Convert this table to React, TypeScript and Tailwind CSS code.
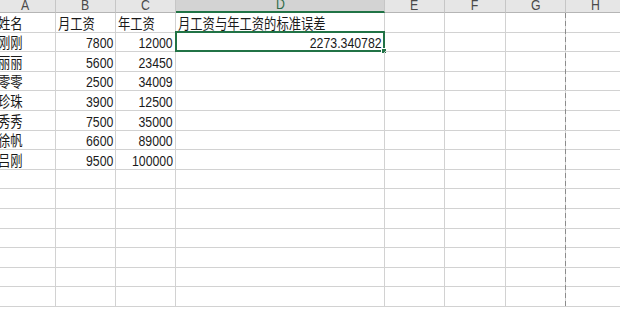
const COLS = [
  { key: "A", w: "w-[60px]" },
  { key: "B", w: "w-[60px]" },
  { key: "C", w: "w-[60px]" },
  { key: "D", w: "w-[209px]" },
  { key: "E", w: "w-[60px]" },
  { key: "F", w: "w-[61px]" },
  { key: "G", w: "w-[60px]" },
  { key: "H", w: "w-[60px]" },
];

// Row heights follow the ~19.6px pitch of the sheet, rounded per row.
const ROW_H = [
  "h-[20px]",
  "h-[19px]",
  "h-[20px]",
  "h-[19px]",
  "h-[20px]",
  "h-[20px]",
  "h-[19px]",
  "h-[20px]",
  "h-[19px]",
  "h-[20px]",
  "h-[20px]",
  "h-[19px]",
  "h-[20px]",
  "h-[19px]",
  "h-[20px]",
];

type Cell = { text: string; num?: boolean };

const DATA: Cell[][] = [
  [{ text: "姓名" }, { text: "月工资" }, { text: "年工资" }, { text: "月工资与年工资的标准误差" }],
  [{ text: "刚刚" }, { text: "7800", num: true }, { text: "12000", num: true }, { text: "2273.340782", num: true }],
  [{ text: "丽丽" }, { text: "5600", num: true }, { text: "23450", num: true }],
  [{ text: "零零" }, { text: "2500", num: true }, { text: "34009", num: true }],
  [{ text: "珍珠" }, { text: "3900", num: true }, { text: "12500", num: true }],
  [{ text: "秀秀" }, { text: "7500", num: true }, { text: "35000", num: true }],
  [{ text: "徐帆" }, { text: "6600", num: true }, { text: "89000", num: true }],
  [{ text: "吕刚" }, { text: "9500", num: true }, { text: "100000", num: true }],
];

const FONT = "font-['Liberation_Sans','Noto_Sans_CJK_SC',sans-serif]";

function HeaderRow() {
  return (
    <div className="flex h-[13px] overflow-hidden">
      {COLS.map((c) => {
        const active = c.key === "D";
        return (
          <div
            key={c.key}
            className={`${c.w} flex shrink-0 items-end justify-center overflow-hidden border-r border-r-[#c6c6c6] ${
              active
                ? "border-b-2 border-b-[#217346] bg-[#d3d3d3] text-[#2f6b47]"
                : "border-b border-b-[#b5b5b5] bg-[#e6e6e6] text-[#4a4a4a]"
            }`}
          >
            <span className="inline-block origin-bottom scale-x-[0.82] text-[15px] leading-none">{c.key}</span>
          </div>
        );
      })}
    </div>
  );
}

function Row({ cells, h, selected }: { cells: Cell[]; h: string; selected: boolean }) {
  return (
    <div className={`flex ${h}`}>
      {COLS.map((c, i) => {
        const cell = cells[i];
        const isSel = selected && i === 3;
        return (
          <div
            key={c.key}
            className={`${c.w} relative flex shrink-0 items-end whitespace-nowrap border-b border-r border-[#d2d2d2] pb-[1px] ${
              cell?.num ? "justify-end pr-[2px]" : "justify-start pl-[2px]"
            }`}
          >
            {cell ? (
              <span
                className={`inline-block scale-x-[0.82] text-[15px] leading-none text-[#1a1a1a] ${
                  cell.num ? "origin-right" : "origin-left"
                }`}
              >
                {cell.text}
              </span>
            ) : null}
            {isSel ? (
              <>
                <div className="pointer-events-none absolute -left-px -right-px -top-[2px] -bottom-px border-2 border-[#217346]" />
                <div className="pointer-events-none absolute -bottom-[3px] -right-[3px] h-[6px] w-[6px] border border-white bg-[#217346]" />
              </>
            ) : null}
          </div>
        );
      })}
    </div>
  );
}

export default function App() {
  const rows = ROW_H.map((h, r) => ({ h, cells: DATA[r] ?? [] }));
  return (
    <div className={`relative h-[309px] w-[620px] overflow-hidden bg-white ${FONT}`}>
      <div className="-ml-[4px]">
        <HeaderRow />
        {rows.map((row, r) => (
          <Row key={r} cells={row.cells} h={row.h} selected={r === 1} />
        ))}
      </div>
      {/* Page break marker between G and H */}
      <div className="pointer-events-none absolute bottom-0 left-[565px] top-[13px] w-px bg-[repeating-linear-gradient(to_bottom,#8c8c8c_0_5px,transparent_5px_8px)]" />
    </div>
  );
}
